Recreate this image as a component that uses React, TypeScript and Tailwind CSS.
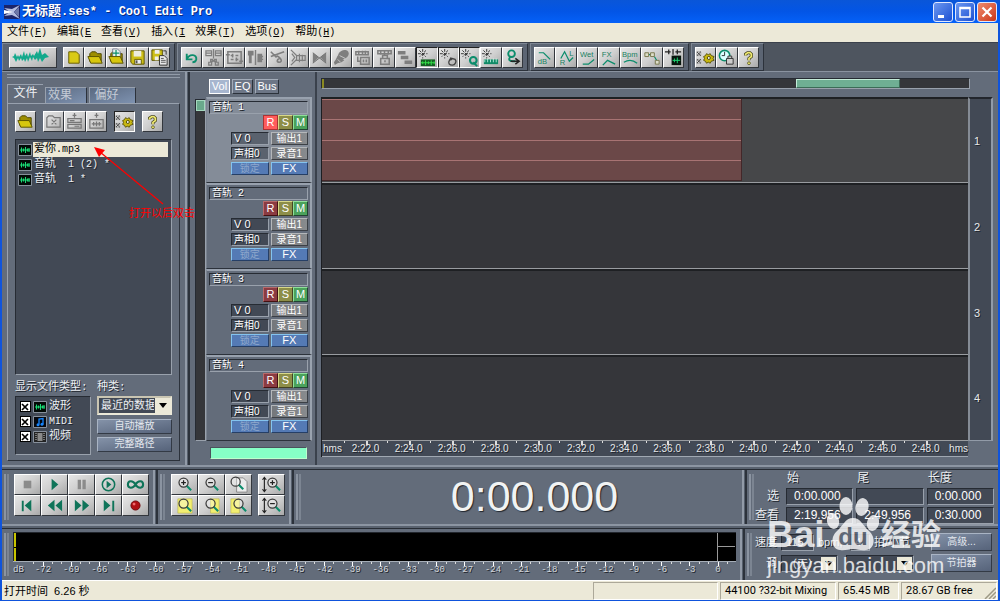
import type { ReactNode } from "react";
import clsx from "clsx";

const mono = "font-['Liberation_Mono','Noto_Sans_CJK_SC',monospace]";
const sans = "font-['Liberation_Sans','Noto_Sans_CJK_SC',sans-serif]";
const shadow = "[text-shadow:1px_1px_0_#20252d]";
const sunken = "border border-t-[#262b33] border-l-[#262b33] border-r-[#99a1ac] border-b-[#99a1ac]";
const raised = "border border-t-[#98a1ae] border-l-[#98a1ae] border-r-[#2c323b] border-b-[#2c323b]";

const G = "#0c8d6c";
const GREY = "#7e7e7e";

function Glyph({ children }: { children: ReactNode }) {
  return (
    <svg viewBox="0 0 20 20" className="size-[19px]" fill="none" aria-hidden="true">
      {children}
    </svg>
  );
}

function Burst() {
  return <path d="M6 1v10M1 6h10M2.5 2.5l7 7M9.500 2.500l-7 7" stroke="#333" strokeWidth="1" strokeDasharray="3 1.400" />;
}

function Gear() {
  return (
    <>
      <path d="M1 4h4v4H1zM1 12h4v4H1z" fill="#f4f4f4" stroke="#777" strokeWidth=".6" />
      <path d="M1 4l4 4M5 4L1 8M1 12l4 4M5 12l-4 4" stroke="#222" strokeWidth=".9" />
      <path d="M8 9l2-1 1-2 2 1 2-1 1 2 3 1-1 2 1 2-3 1-1 2-2-1-2 1-1-2-2-1 1-2z" fill="#c9b810" stroke="#514a00" strokeWidth=".9" />
      <circle cx="13.500" cy="10.500" r="1.600" fill="#eee" stroke="#514a00" />
    </>
  );
}

function Folder({ plus = false }: { plus?: boolean }) {
  return (
    <>
      <path d="M4 14V6l2-2h4l2 2h4v8z" fill="#9d8e00" stroke="#4d4600" />
      {plus && <path d="M6 1h5l3 3v6H6z" fill="#e8f4ef" stroke="#557" strokeWidth=".7" />}
      {plus && <path d="M9.500 2v7M6 5.500h7" stroke={G} strokeWidth="1.300" />}
      <path d="M2 9h12l3 7H5z" fill="#d7c70e" stroke="#5a5200" />
    </>
  );
}

function Question() {
  return (
    <>
      <path d="M7 8V6.500L9 5h2.500L13 6.500V9l-2.500 2v2" stroke="#4c4a20" strokeWidth="3.400" />
      <path d="M7 8V6.500L9 5h2.500L13 6.500V9l-2.500 2v2" stroke="#f0ea70" strokeWidth="1.800" />
      <circle cx="10.500" cy="16" r="1.500" fill="#f0ea70" stroke="#4c4a20" strokeWidth=".8" />
    </>
  );
}

function Lens({ sign = "", x = 9, y = 8 }: { sign?: string; x?: number; y?: number }) {
  return (
    <>
      <path d={`M${x + 3} ${y + 3}l5 5`} stroke={G} strokeWidth="2.200" />
      <circle cx={x} cy={y} r="4.800" stroke="#3b3b3b" strokeWidth="1.300" fill="#ffffff55" />
      {sign !== "" && <path d={`M${x - 2.500} ${y}h5`} stroke="#222" strokeWidth="1.300" />}
      {sign === "+" && <path d={`M${x} ${y - 2.500}v5`} stroke="#222" strokeWidth="1.300" />}
    </>
  );
}

function GlyphText({ x, y, children }: { x: number; y: number; children: string }) {
  return (
    <text x={x} y={y} fontSize="8" fill="#17805f" fontFamily="Liberation Sans, sans-serif">
      {children}
    </text>
  );
}

function WaveChip() {
  return (
    <svg viewBox="0 0 14 12" className="h-3 w-3.5 shrink-0" aria-hidden="true">
      <path d="M.5.5h13v11H.5z" fill="#030a06" stroke="#87909c" />
      <path d="M2 6h10M3.500 3.500v5M5.500 4.500v3M7.500 3v6M9.500 4.500v3M11 4v4" stroke="#19dd75" strokeWidth="1.100" />
    </svg>
  );
}

const fileIcons: [string, ReactNode][] = [
  ["新建", <path d="M5 4h8l3 3v9H5z" fill="#d9ca16" stroke="#665d00" />],
  ["打开", <Folder />],
  ["追加", <Folder plus />],
  ["保存", <><path d="M3 3h14v14H5l-2-2z" fill="#cdbf17" stroke="#5a5200" /><path d="M6 3h8v6H6z" fill="#ececdf" /><path d="M7 12h7v5H7z" fill="#eee" stroke="#6b6200" /><path d="M8 13h2v3H8z" fill="#555" /></>],
  ["另存为", <><path d="M2 2h11v11H2z" fill="#cdbf17" stroke="#5a5200" /><path d="M5 2h5v4H5zM5 9h4v4H5z" fill="#eee" /><path d="M14 3h3v4" stroke="#333" /><path d="M10 8h5l3 3v7h-8z" fill="#e8e8e8" stroke="#333" /><path d="M11.500 11h3M11.500 13h5M11.500 15h5" stroke="#555" /></>],
];

const editIcons: [string, ReactNode, boolean?][] = [
  ["撤消", <path d="M5 6v6h6M5 12c3-7 11-5 10 0-.5 2-2 3-4 3" stroke={G} strokeWidth="2" />],
  ["循环", <path d="M2 3h6v5H2zM12 3h6v5h-6zM2 5.500h6M12 5.500h6M10 1v10M7 12h2v2H7zM11 12h2v2h-2zM5 15h3v3H5zM12 15h3v3h-3zM8 15l4-3M12 15l-4-3" stroke={GREY} strokeWidth="1.300" />],
  ["修剪", <path d="M3 4h14v12H3zM1 7h4M15 14h4M6 8h3M11 8h3M6 12h3M11 12h3M8 6v4M12 10v4" stroke={GREY} strokeWidth="1.600" />],
  ["拆分", <><path d="M2 3h6v5H2zM3 8h3v8H3zM12 6h5v9h-5z" fill={GREY} /><path d="M10 2v16M13 9h5M13 12h5" stroke={GREY} strokeWidth="1.500" /></>],
  ["剪切", <path d="M3 4l6 6M3 9l14-5M9 8c6 3 6 7 3 7s-3-3 0-4" stroke={GREY} strokeWidth="1.700" />],
  ["合并", <path d="M2 2l6 6v4l-6 6M3 6l3 4-3 4M8 8h9v5H8zM11 6v9M14 7v7" stroke={GREY} strokeWidth="1.300" />],
  ["交叉淡化", <><path d="M3 5l6 5-6 6zM17 5l-6 5 6 6z" fill={GREY} /><path d="M3 5l14 11M17 5L3 16" stroke="#6e6e6e" /></>],
  ["混缩", <><ellipse cx="12" cy="7" rx="6" ry="4.500" fill={GREY} transform="rotate(-30 12 7)" /><path d="M6 8l7 5-3 2-4 1-3 2-1-3 2-3z" fill={GREY} /><path d="M8 8l6 3M6 12l3 3" stroke="#c6c6c6" /></>],
  ["分组", <path d="M3 4h13v3H3zM6 3v5M10 3v5M13 3v5M8 10h9v7H8zM5 9v5h3M11 12v3M14 12v3" stroke={GREY} strokeWidth="1.600" />],
  ["锁定时间", <path d="M3 3h14v3H3zM6 2v5M10 2v5M14 2v5M6 11h9v6H6zM8 11V8h5v3M10.500 13v2" stroke={GREY} strokeWidth="1.600" />],
  ["对齐", <path d="M2 5h8M5 10h8M9 15h8" stroke={GREY} strokeWidth="3.500" />],
  ["吸附标尺", <><Burst /><path d="M4 12h15v7H4z" fill="#155f23" /><path d="M4 15.500h15M6 14v3M9 13v5M12 14v3M15 13v5M18 14v3" stroke="#35e04a" /></>, true],
  ["吸附循环", <><Burst /><path d="M13 10l-2 3c-2 3 0 5 3 5s5-4 3-6l-3-1-2 2" stroke="#444" strokeWidth="1.500" /></>, true],
  ["吸附标记", <><Burst /><circle cx="14" cy="13" r="3.500" stroke={G} strokeWidth="2.200" /><path d="M14 15l4 4" stroke={G} strokeWidth="2" /></>, true],
  ["吸附块", <><Burst /><path d="M3 12h15v5H3z" fill="#108a67" /><path d="M4 12v3M7 11v4M10 12v3M13 11v4M16 11v4" stroke="#d7fff2" strokeWidth=".8" /></>],
  ["标记", <><circle cx="9" cy="6" r="3.500" stroke={G} strokeWidth="2" /><path d="M8 9c-3 3-1 5 2 5h3" stroke={G} strokeWidth="2" /><path d="M8 14h8M13 11l4 3-4 3" stroke="#222" strokeWidth="1.600" /></>],
];

const envelopeIcons: [string, ReactNode][] = [
  ["音量包络", <><path d="M4 5h5l7 7" stroke={G} strokeWidth="1.300" /><GlyphText x={3} y={17}>dB</GlyphText></>],
  ["声相包络", <><path d="M4 11l4-7 5 10 4-4" stroke={G} strokeWidth="1.300" /><GlyphText x={13} y={8}>L</GlyphText><GlyphText x={3} y={18}>R</GlyphText></>],
  ["湿声包络", <><GlyphText x={2} y={9}>Wet</GlyphText><path d="M5 17h6l6-5" stroke={G} strokeWidth="1.400" /></>],
  ["效果包络", <><GlyphText x={3} y={9}>FX</GlyphText><path d="M4 18l5-5 8 4" stroke={G} strokeWidth="1.400" /></>],
  ["速度包络", <><GlyphText x={1} y={9}>Bpm</GlyphText><path d="M3 15c5-3 9-3 14 1" stroke={G} strokeWidth="1.400" /></>],
  ["编辑包络", <><path d="M7 7h2M13 9l3 5" stroke={G} strokeWidth="1.300" /><path d="M3 5h4v4H3zM9 5h4v4H9zM14 13h4v4h-4z" fill="#dedecb" stroke="#77764c" /></>],
  ["修剪块", <><path d="M1 4h6M12 4h6M5 1.500v5M9.500 1v6M14 1.500v5" stroke="#222" strokeWidth="1.300" /><path d="M8 8h10v10H8z" fill="#07150d" /><path d="M9 13h8M11 11v4M14 10v6" stroke="#1dd873" /></>],
];

const optionIcons: [string, ReactNode][] = [
  ["设置", <Gear />],
  ["锁定时钟", <><circle cx="8" cy="8" r="5.500" stroke={G} strokeWidth="1.600" fill="#dff" /><path d="M8 4v4H5" stroke="#333" /><path d="M10 11h7v6h-7zM11.500 11V8.500h4V11" fill="#ccc" stroke="#333" /></>],
  ["帮助", <Question />],
];

const transport: [string, ReactNode][] = [
  ["停止", <path d="M6 6h8v8H6z" fill="#8b8b8b" />],
  ["播放", <path d="M7 4l7 6-7 6z" fill="#0f7459" />],
  ["暂停", <path d="M6 5h3.500v10H6zM11 5h3.500v10H11z" fill="#8b8b8b" />],
  ["播放到结尾", <><circle cx="10" cy="10" r="6.500" stroke="#0f7459" strokeWidth="1.600" /><path d="M8 6l5 4-5 4z" fill="#0f7459" /></>],
  ["循环播放", <path d="M10 10c-3-5-8-4-8 0s5 5 8 0 8-4 8 0-5 5-8 0z" stroke="#0f7459" strokeWidth="2.200" />],
  ["到开头", <path d="M4 5h2v11H4zM14 4v12l-7-6z" fill="#0f7459" />],
  ["快退", <path d="M10 4v12l-7-6zM18 4v12l-7-6z" fill="#0f7459" />],
  ["快进", <path d="M3 4v12l7-6zM11 4v12l7-6z" fill="#0f7459" />],
  ["到结尾", <path d="M14 5h2v11h-2zM5 4v12l7-6z" fill="#0f7459" />],
  ["录音", <><circle cx="10" cy="10" r="4.800" fill="#b01014" stroke="#6e0508" /><circle cx="8.500" cy="8.500" r="1.500" fill="#ef6b6e" /></>],
];

const zooms: [string, ReactNode][] = [
  ["放大", <Lens sign="+" />],
  ["缩小", <Lens sign="-" />],
  ["全部", <><path d="M8 3h7l4 4v11H8z" fill="#ececec" stroke="#888" /><Lens x={7} y={7} /></>],
  ["缩放到选区", <><path d="M3 3h15v15H3z" fill="#f2ee70" stroke="#b9b545" strokeWidth=".6" /><Lens /></>],
  ["选区左侧", <><path d="M9 3h9v15H9z" fill="#f2ee70" stroke="#b9b545" strokeWidth=".6" /><Lens /></>],
  ["选区右侧", <><path d="M2 3h9v15H2z" fill="#f2ee70" stroke="#b9b545" strokeWidth=".6" /><Lens x={10} /></>],
];

const verticalZooms: [string, ReactNode][] = [
  ["垂直放大", <><path d="M2.500 3v14M.5 5l2-2.500 2 2.500M.5 15l2 2.500 2-2.500" stroke="#222" strokeWidth="1.200" /><Lens sign="+" x={11} /></>],
  ["垂直缩小", <><path d="M2.500 3v14M.5 5l2-2.500 2 2.500M.5 15l2 2.500 2-2.500" stroke="#222" strokeWidth="1.200" /><Lens sign="-" x={11} /></>],
];

function MetalButton({ label, pressed, className, children }: { label: string; pressed?: boolean; className?: string; children: ReactNode }) {
  return (
    <button
      type="button"
      aria-label={label}
      className={clsx(
        "flex h-[21px] min-w-0 items-center justify-center overflow-hidden border bg-linear-to-br from-[#e6e6e6] via-[#cfcfcf] to-[#a9a9a9]",
        pressed ? "border-t-[#222] border-l-[#222] border-r-white border-b-white" : "border-t-white border-l-white border-r-[#33373d] border-b-[#33373d]",
        className,
      )}
    >
      {children}
    </button>
  );
}

function IconStrip({ items, className }: { items: [string, ReactNode, boolean?][]; className: string }) {
  return (
    <div className={clsx("flex", className)}>
      {items.map(([label, icon, pressed]) => (
        <MetalButton key={label} label={label} pressed={pressed} className="flex-1">
          <Glyph>{icon}</Glyph>
        </MetalButton>
      ))}
    </div>
  );
}

function MixedText({ text }: { text: string }) {
  return text.split(/([\x20-\x7e]+)/).map((part, i) => (
    <span key={i} className={i % 2 === 1 ? "text-[10px]" : "text-[11px]"}>{part}</span>
  ));
}

const toolGroup = "flex items-center border border-t-[#7d8693] border-l-[#7d8693] border-r-[#2c323b] border-b-[#2c323b] bg-[#5c6573]";

function Grip() {
  return <div className="my-1 w-[5px] shrink-0 self-stretch border-x-2 border-[#8b94a1] border-r-[#7c8592]" />;
}

function Divider() {
  return <div className="w-[5px] shrink-0 self-stretch border-l-2 border-r-2 border-l-[#929ba8] border-r-[#2c323b] bg-[#565f6c]" />;
}

function HDivider() {
  return <div className="h-[5px] shrink-0 border-t-2 border-b border-t-[#8c95a2] border-b-[#272c34] bg-[#59626f]" />;
}

const menus: [string, string, boolean][] = [
  ["文件", "F", true],
  ["编辑", "E", false],
  ["查看", "V", true],
  ["插入", "I", false],
  ["效果", "T", true],
  ["选项", "O", true],
  ["帮助", "H", true],
];

function TitleBar() {
  return (
    <header className="-mx-0.5 flex h-[23px] items-center bg-linear-to-b from-[#0a56d8] via-[#0355e6] to-[#0561f8] pr-[3px] pl-1 text-white">
      <svg viewBox="0 0 16 16" className="mr-0.5 size-4" aria-hidden="true">
        <path d="M0 1h16v14H0z" fill="#1b2469" />
        <path d="M0 4l8 1 8-4-6 7 6 7-8-4-8 1 6-4z" fill="#b4bde0" />
        <path d="M0 6l9 2-9 2z" fill="#fff" />
        <path d="M10 8l5-5v10z" fill="#6d77a8" />
      </svg>
      <h1 className={clsx("flex items-center font-bold whitespace-pre [text-shadow:1px_1px_0_#0a2a80]", mono)}>
        <span className="text-[13px]">无标题</span>
        <span className="text-[12px]">.ses* - Cool Edit Pro</span>
      </h1>
      <div className="ml-auto flex gap-0.5">
        {["最小化", "最大化", "关闭"].map((name, i) => (
          <button
            key={name}
            type="button"
            aria-label={name}
            className={clsx("size-5 rounded-[3px] border border-[#dfe8ff]", i === 2 ? "bg-linear-to-br from-[#ee8a6c] to-[#cc3210]" : "bg-linear-to-br from-[#6c97f0] to-[#1c4fd2]")}
          >
            <svg viewBox="0 0 18 18" fill="none" stroke="#fff" aria-hidden="true">
              {i === 0 && <path d="M4 13.500h6" strokeWidth="3" />}
              {i === 1 && <path d="M4 4.500h10v9.500H4zM4 5.500h10" strokeWidth="1.500" />}
              {i === 2 && <path d="M4.500 4.500l9 9M13.500 4.500l-9 9" strokeWidth="2.200" />}
            </svg>
          </button>
        ))}
      </div>
    </header>
  );
}

function Toolbar() {
  return (
    <div className="flex h-[30px] gap-0.5 border-t border-b border-t-[#3b414b] border-b-[#8a93a0] bg-[#4e555f]">
      <div className={clsx(toolGroup, "gap-1.5 pr-1 pl-1.5")}>
        <MetalButton label="波形视图" className="w-12">
          <svg viewBox="0 0 46 19" className="h-[19px] w-[46px]" aria-hidden="true">
            <path d="M2 9l2-1 1-3 2 4 1-2 1 2 2-3 1 3 2-6 1 5 2-3 1 4 2-5 1 4 2-2 1 2 3-5 1 3 2-6 2 7 3-2 4 4-4 1-3 4-2-4-2 4-1-4-2 2-2-3-1 4-2-4-2 5-1-4-2 4-1-3-2 2-1-3-2 3-1-3-2 4-2-4z" fill="#12a98c" />
          </svg>
        </MetalButton>
        <IconStrip items={fileIcons} className="w-[107px]" />
      </div>
      <div className={clsx(toolGroup, "pr-1 pl-[3px]")}>
        <IconStrip items={editIcons} className="w-[342px]" />
      </div>
      <div className={clsx(toolGroup, "pr-1 pl-[3px]")}>
        <IconStrip items={envelopeIcons} className="w-[150px]" />
      </div>
      <div className={clsx(toolGroup, "pr-1 pl-[3px]")}>
        <IconStrip items={optionIcons} className="w-16" />
      </div>
    </div>
  );
}

const steel = "border border-t-[#a9b4c4] border-l-[#a9b4c4] border-r-[#333a45] border-b-[#333a45] bg-linear-to-br from-[#8492a8] to-[#56637a] text-[#e4e8ee]";

function FilePanel() {
  return (
    <aside className={clsx("relative flex flex-col px-[5px] pt-0.5 pb-1 text-[11px] text-[#eceff3]", mono, shadow)}>
      <div className="h-1 border-y border-[#929ba8]" />
      <nav className="mt-[6px] flex items-end gap-0.5 text-[12px]">
        <button type="button" className="h-[19px] w-9 border-t border-l border-[#98a1ae] bg-[#636c7a] leading-[19px]">文件</button>
        {["效果", "偏好"].map((t, i) => (
          <button key={t} type="button" className={clsx("h-4 border-t border-l border-r border-t-[#98a1ae] border-l-[#98a1ae] border-r-[#2c323b] bg-linear-to-br from-[#5b6a81] to-[#7e92b0] pr-3 leading-[16px] text-[#c5ccd6]", i === 0 ? "w-[42px]" : "w-[47px]")}>
            {t}
          </button>
        ))}
      </nav>
      <div className={clsx("flex flex-1 flex-col px-[7px] pt-[7px] pb-[5px]", raised)}>
        <div className="flex gap-[7px]">
          <MetalButton label="打开文件" className="w-[21px]"><Glyph><Folder /></Glyph></MetalButton>
          <IconStrip
            className="w-16"
            items={[
              ["关闭文件", <path d="M3 6l2-2h4l2 2h6v10H3zM8 8l5 5M13 8l-5 5" stroke="#777" strokeWidth="1.300" />],
              ["插入到多轨", <path d="M10 1v5M8 3.500h4M3 7h14v4H3zM3 13h14v4H3zM5 9h5M10 15h5" stroke="#777" strokeWidth="1.300" />],
              ["编辑文件", <path d="M10 1v5M8 3.500h4M3 8h14v9H3zM5 12.500h10M7 10.500v4M10 10v5M13 10.500v4" stroke="#777" strokeWidth="1.300" />],
            ]}
          />
          <MetalButton label="选项" pressed className="w-[21px]"><Glyph><Gear /></Glyph></MetalButton>
          <MetalButton label="帮助" className="w-[21px]"><Glyph><Question /></Glyph></MetalButton>
        </div>
        <ul className={clsx("mt-[7px] min-h-[236px] flex-1 bg-[#424955] py-[2px] pr-[3px] pl-0.5", sunken)}>
          {["爱你.mp3", "音轨  1 (2) *", "音轨  1 *"].map((name, i) => (
            <li key={name} className="flex h-[15px] items-center gap-px whitespace-pre">
              <WaveChip />
              <span className={clsx("h-[15px] flex-1 pl-px leading-[15px]", i === 0 && "bg-[#ece9d8] text-black [text-shadow:none]")}>
                <MixedText text={name} />
              </span>
            </li>
          ))}
        </ul>
        <div className="mt-1 flex gap-1.5">
          <div className="w-[76px]">
            <div className="h-[17px] leading-[17px]">显示文件类型:</div>
            <div className={clsx("flex h-[59px] flex-col bg-[#424955] pt-0.5 pl-[3px]", sunken)}>
              {["波形", "MIDI", "视频"].map((t, i) => (
                <label key={t} className="flex h-[15px] items-center gap-0.5">
                  <span className="grid size-3 place-items-center">
                    <input type="checkbox" defaultChecked className="peer col-start-1 row-start-1 size-[11px] appearance-none border border-black bg-white" />
                    <svg viewBox="0 0 10 10" className="pointer-events-none col-start-1 row-start-1 hidden size-2.5 peer-checked:block" aria-hidden="true">
                      <path d="M2 2l6 6M8 2L2 8" stroke="#000" strokeWidth="1.700" />
                    </svg>
                  </span>
                  {i === 0 && <WaveChip />}
                  {i === 1 && (
                    <svg viewBox="0 0 14 12" className="h-3 w-3.5" aria-hidden="true">
                      <path d="M.5.5h13v11H.5z" fill="#05080e" stroke="#87909c" />
                      <path d="M6 8.500V3l4-.5V8" fill="none" stroke="#1686ff" strokeWidth="1.300" />
                      <circle cx="5" cy="8.700" r="1.500" fill="#1686ff" />
                      <circle cx="9" cy="8.200" r="1.500" fill="#1686ff" />
                    </svg>
                  )}
                  {i === 2 && (
                    <svg viewBox="0 0 14 12" className="h-3 w-3.5" aria-hidden="true">
                      <path d="M.5.5h13v11H.5z" fill="#222" stroke="#87909c" />
                      <path d="M4.500 2h5v8h-5z" fill="#8a8a8a" />
                      <path d="M3 2v8M11 2v8" stroke="#ccc" strokeDasharray="1 1" />
                    </svg>
                  )}
                  <span><MixedText text={t} /></span>
                </label>
              ))}
            </div>
          </div>
          <div className="flex flex-1 flex-col">
            <label htmlFor="kind" className="h-[17px] leading-[17px]">种类:</label>
            <div className="relative">
              <select id="kind" className="block h-[19px] w-full appearance-none border-2 border-[#ece9d8] border-t-[#c9c5b2] border-l-[#c9c5b2] bg-[#424955] pr-4 pl-0.5 text-[11px] leading-[14px]">
                <option>最近的数据</option>
              </select>
              <DropArrow />
            </div>
            <button type="button" className={clsx("mt-1 h-[15px] text-[10px] leading-[13px]", steel)}>自动播放</button>
            <button type="button" className={clsx("mt-[3px] h-[15px] text-[10px] leading-[13px]", steel)}>完整路径</button>
          </div>
        </div>
      </div>
      <div className="pointer-events-none absolute top-[74px] left-[90px] text-[#f00] [text-shadow:none]">
        <svg viewBox="0 0 74 60" className="h-[60px] w-[74px]" aria-hidden="true">
          <path d="M71 58L8 6" stroke="#f00" strokeWidth="1.200" />
          <path d="M2 1l11 3-6 7z" fill="#f00" />
        </svg>
        <p className="pl-[37px] text-[11px] leading-[16px] whitespace-nowrap">打开以后双击</p>
      </div>
    </aside>
  );
}

function DropArrow() {
  return (
    <span className="pointer-events-none absolute top-0.5 right-0.5 bottom-0.5 grid w-[15px] place-items-center bg-[#ece9d8]">
      <svg viewBox="0 0 8 5" className="h-[5px] w-2" aria-hidden="true"><path d="M0 0h8L4 5z" fill="#000" /></svg>
    </span>
  );
}

const rsm = "size-[15px] border text-[11px] leading-[13px]";
const grayBtn = "h-[13px] border border-t-[#b4b7ba] border-l-[#b4b7ba] border-r-[#3c4046] border-b-[#3c4046] bg-linear-to-r from-[#74777b] to-[#888b8e] leading-[11px]";
const blueBtn = "h-[13px] border border-t-[#84c3ee] border-l-[#84c3ee] border-r-[#263f66] border-b-[#263f66] bg-[#547ab5] leading-[11px]";

function Track({ n }: { n: number }) {
  const on = n === 1;
  return (
    <section className={clsx("h-[86px] border-t-2 border-r-2 border-b border-l border-t-[#98a1ae] border-r-[#9aa3af] border-b-[#2c323b] border-l-[#7a8390] px-0.5 pt-0.5", on ? "bg-[#848c98]" : "bg-[#636c7a]")}>
      <h2 className={clsx("h-[13px] pl-0.5 text-[10px] leading-[11px] font-normal whitespace-pre", mono, sunken)}>音轨 {n}</h2>
      <div className="mt-px flex justify-end">
        <button type="button" className={clsx(rsm, on ? "border-[#a33] bg-[#ff5c5c]" : "border-t-[#b86a6a] border-l-[#b86a6a] border-r-[#411] border-b-[#411] bg-[#8b3b42]")}>R</button>
        <button type="button" className={clsx(rsm, "border-t-[#d8d888] border-l-[#d8d888] border-r-[#442] border-b-[#442] bg-[#8d8e48]")}>S</button>
        <button type="button" className={clsx(rsm, "border-t-[#8fe09a] border-l-[#8fe09a] border-r-[#243] border-b-[#243] bg-[#4ba25b]")}>M</button>
      </div>
      <div className="mt-0.5 ml-[22px] grid grid-cols-2 gap-x-0.5 gap-y-0.5 text-[10px]">
        <div className={clsx("h-[13px] pl-0.5 text-[11px] leading-[11px]", sunken, on ? "bg-[#5a626e]" : "bg-[#424955]")}>V 0</div>
        <button type="button" className={grayBtn}>输出1</button>
        <div className={clsx("h-[13px] pl-0.5 leading-[11px]", sunken, on ? "bg-[#5a626e]" : "bg-[#424955]")}>声相0</div>
        <button type="button" className={grayBtn}>录音1</button>
        <button type="button" className={clsx(blueBtn, "text-[#8fa8cc]")}>锁定</button>
        <button type="button" className={clsx(blueBtn, "text-[11px]")}>FX</button>
      </div>
    </section>
  );
}

function TrackPanel() {
  return (
    <section className={clsx("flex flex-col pt-[7px] pr-px pl-[5px] text-white", sans, shadow)}>
      <div className="ml-[14px] flex h-[16px] items-start gap-[2px] text-[11px] leading-[13px]">
        <button type="button" className="h-[15px] w-[21px] border border-white bg-[#a7b6cf]">Vol</button>
        <button type="button" className="h-[15px] w-[21px] border border-[#a2abb8] border-r-[#2c323b] border-b-[#2c323b] bg-[#6d7686]">EQ</button>
        <button type="button" className="h-[15px] w-[24px] border border-[#a2abb8] border-r-[#2c323b] border-b-[#2c323b] bg-[#6d7686]">Bus</button>
      </div>
      <div className="mt-[2px] flex">
        <div className={clsx("mt-0.5 w-[11px] bg-[#35363a]", sunken)}>
          <div className="h-[11px] border border-[#a5d8bf] bg-[#6aa98c]" />
        </div>
        <div className="flex-1">{[1, 2, 3, 4].map((n) => <Track key={n} n={n} />)}</div>
      </div>
      <div className="mt-1.5 mr-[5px] ml-[15px] h-[12px] border border-t-[#4b525c] border-l-[#4b525c] border-r-[#bfc] border-b-[#bfc] bg-[#86ffc6]" />
    </section>
  );
}

const seconds = Array.from({ length: 14 }, (_, i) => 22 + i * 2);

function Timeline() {
  return (
    <section className={clsx("flex min-w-0 flex-col pt-[6px] pr-[5px] pl-1 text-[#e6e8ea]", sans, shadow)}>
      <div className={clsx("mr-[23px] flex h-[11px] bg-[#35363a]", sunken)}>
        <div className="w-0.5 border-l-2 border-[#8b8a22]" />
        <div className="ml-[73%] w-[16%] border border-t-[#c4ecd9] border-l-[#c4ecd9] border-r-[#3c6b57] border-b-[#3c6b57] bg-[#6fae93]" />
      </div>
      <div className="mt-[8px] flex">
        <div className="min-w-0 flex-1 border-l border-l-[#1c1e22]">
          {[1, 2, 3, 4].map((n) => (
            <div key={n} className={clsx("h-[86px] border-t-2 border-b border-t-[#1e2023] border-b-[#999ca0]", n === 1 ? "bg-[#464749]" : "bg-[#35363a]")}>
              {n === 1 && (
                <div className="grid h-[82px] w-[65%] grid-rows-4 border-r border-b border-[#442729] bg-[#6b4848]">
                  {[0, 1, 2, 3].map((k) => <div key={k} className="border-t border-[#a87373]" />)}
                </div>
              )}
            </div>
          ))}
          <div className="flex h-[16px] border-b border-[#a0a8b2] bg-[#424955] text-[10px] leading-[12px]">
            <span className="w-[22px] pt-0.5 pl-px">hms</span>
            {seconds.map((s) => (
              <div key={s} className="flex min-w-0 flex-1 flex-col items-stretch">
                <div className="grid h-1 grid-cols-2 items-start">
                  <div className="h-0.5 border-l border-[#ddd]" />
                  <div className="h-1 border-l-2 border-[#ddd]" />
                </div>
                <span className="-mt-0.5 text-center">2:{s}.0</span>
              </div>
            ))}
            <span className="w-[21px] pt-0.5 pl-0.5">hms</span>
          </div>
        </div>
        <div className="w-[25px]">
          <div className="border-t-2 border-r-2 border-b border-l-2 border-t-[#22262d] border-r-[#929ba8] border-b-[#929ba8] border-l-[#858c95] bg-[#424955]">
            {[1, 2, 3, 4].map((n) => <div key={n} className="flex h-[86px] items-center pl-[4px] text-[11px] first:h-[85px] last:h-[84px]">{n}</div>)}
          </div>
        </div>
      </div>
    </section>
  );
}

function PadGrid({ items, cols }: { items: [string, ReactNode][]; cols: string }) {
  return (
    <div className={clsx("grid", cols)}>
      {items.map(([label, icon]) => (
        <MetalButton key={label} label={label} className="w-[27px]"><Glyph>{icon}</Glyph></MetalButton>
      ))}
    </div>
  );
}

const field = "h-[17px] w-full min-w-0 bg-[#424955] px-[7px] text-[12px] leading-[15px] text-white outline-none";

function TimeFields() {
  return (
    <div className={clsx("grid w-[238px] shrink-0 grid-cols-[27px_repeat(3,1fr)] items-center gap-x-[3px] gap-y-px text-[12px] text-[#e8ebef]", sans, shadow)}>
      <span />
      <span className="pl-px leading-[15px]">始</span>
      <span className="pl-px leading-[15px]">尾</span>
      <span className="pl-px leading-[15px]">长度</span>
      {[["选", "0:00.000", "", "0:00.000"], ["查看", "2:19.956", "2:49.956", "0:30.000"]].map(([name, ...values]) => (
        <TimeRow key={name} name={name} values={values} />
      ))}
    </div>
  );
}

function TimeRow({ name, values }: { name: string; values: string[] }) {
  return (
    <>
      <span className="flex justify-end pr-1 leading-[17px] whitespace-nowrap">{name}</span>
      {values.map((v, i) => <input key={i} aria-label={`${name} ${["始", "尾", "长度"][i]}`} defaultValue={v} className={clsx(field, sunken)} />)}
    </>
  );
}

const levels = Array.from({ length: 25 }, (_, i) => -72 + i * 3);

function Meter() {
  return (
    <div className={clsx("min-w-0 flex-1 pt-[3px] pr-0.5 pl-[2px] text-[9px] text-[#d3d7dc]", mono, shadow)}>
      <div className="flex h-[29px] border-t border-l border-[#22262d] bg-black pr-px">
        <div className="grid w-0.5 grid-rows-2 gap-px"><i className="bg-[#c8c400]" /><i className="bg-[#c8c400]" /></div>
        <div className="flex-1" />
        <div className="grid w-[18px] grid-rows-2 border-l border-[#999]"><i className="border-b border-[#999]" /><i /></div>
      </div>
      <div className="flex border-t border-[#a5adb7]">
        <span className="w-4 pt-0.5 leading-[12px]">dB</span>
        {levels.map((l) => (
          <div key={l} className="min-w-0 flex-1">
            <div className="grid h-1 grid-cols-3 justify-items-center">
              <i className="h-0.5 w-px bg-[#ddd]" />
              <i className="h-1 w-px bg-white" />
              <i className="h-0.5 w-px bg-[#ddd]" />
            </div>
            <span className="-mt-0.5 block text-center leading-[12px]">{l}</span>
          </div>
        ))}
        <span className="w-1" />
      </div>
    </div>
  );
}

function TempoPanel() {
  return (
    <div className={clsx("flex w-[238px] shrink-0 flex-col gap-[3px] pt-1 text-[11px] text-[#e8ebef]", sans, shadow)}>
      <div className="flex h-[18px] items-center gap-1">
        <label htmlFor="bpm" className="flex w-[23px] justify-end whitespace-nowrap">速度</label>
        <input id="bpm" defaultValue="115" className={clsx("h-[17px] w-[33px] bg-[#424955] px-1", sunken)} />
        <span className="w-7">bpm,</span>
        <input aria-label="拍数" defaultValue="4" className={clsx("h-[17px] w-5 bg-[#424955] px-1", sunken)} />
        <span className="whitespace-nowrap">拍/小节</span>
        <button type="button" className={clsx("ml-auto h-[18px] w-[61px] text-[10px] leading-[16px]", steel)}>高级...</button>
      </div>
      <div className="flex h-[18px] items-center gap-1">
        <label htmlFor="key" className="w-[23px] text-right">调</label>
        <div className="relative w-[57px]">
          <select id="key" className={clsx("block h-[17px] w-full appearance-none bg-[#424955] pl-1", sunken)}><option>（无）</option></select>
          <DropArrow />
        </div>
        <div className="relative ml-1 w-[68px]">
          <select aria-label="节奏" className={clsx("block h-[17px] w-full appearance-none bg-[#424955]", sunken)}><option></option></select>
          <DropArrow />
        </div>
        <button type="button" className={clsx("ml-auto h-[18px] w-[61px] text-[10px] leading-[16px]", steel)}>节拍器</button>
      </div>
    </div>
  );
}

function Watermark() {
  return (
    <div className={clsx("pointer-events-none absolute right-[54px] bottom-[22px] w-[179px] text-white opacity-80", sans)}>
      <div className="flex h-[58px] items-end">
        <b className="w-[60px] text-[37px] leading-[34px]">Bai</b>
        <svg viewBox="0 0 52 56" className="h-14 w-[52px]" aria-hidden="true">
          <g fill="#fff">
            <ellipse cx="19" cy="10" rx="6.500" ry="9" />
            <ellipse cx="35" cy="11" rx="6.500" ry="9" transform="rotate(12 35 11)" />
            <ellipse cx="6" cy="25" rx="6" ry="8" transform="rotate(-14 6 25)" />
            <ellipse cx="46" cy="27" rx="6" ry="8" transform="rotate(14 46 27)" />
            <path d="M26 22c8 0 10 8 16 13 7 6 6 18-3 19-5 1-8-1-13-1s-8 2-13 1C4 53 3 41 10 35c6-5 8-13 16-13z" />
          </g>
          <text x="26" y="49" textAnchor="middle" fontSize="24" fontWeight="bold" fill="#5f6876" fontFamily="Liberation Sans, sans-serif">du</text>
        </svg>
        <b className="pl-0.5 text-[30px] leading-[34px] whitespace-nowrap">经验</b>
      </div>
      <p className="text-[22px] leading-[28px]">jingyan.baidu.com</p>
    </div>
  );
}

function StatusBar() {
  const cell = "border border-t-[#aca899] border-l-[#aca899] border-r-white border-b-white px-1 leading-[16px] whitespace-nowrap font-['Roboto','Noto_Sans_CJK_SC',sans-serif]";
  return (
    <footer className={clsx("flex h-5 gap-0.5 border-t border-white bg-[#ece9d8] pt-px pr-px text-[11px] text-black", sans)}>
      <span className="flex-1 pl-0.5 leading-[18px] whitespace-pre">打开时间  6.26 秒</span>
      <span className={clsx(cell, "w-[125px]")} />
      <span className={clsx(cell, "w-[116px]")}>44100 ?32-bit Mixing</span>
      <span className={clsx(cell, "w-[61px]")}>65.45 MB</span>
      <span className={clsx(cell, "flex w-[96px] justify-between pr-0")}>
        28.67 GB free
        <svg viewBox="0 0 12 12" className="size-3 self-end" aria-hidden="true"><path d="M1 12L12 1M5 12l7-7M9 12l3-3" stroke="#9d9985" strokeWidth="1.500" /></svg>
      </span>
    </footer>
  );
}

export default function App() {
  return (
    <div className="relative flex min-h-screen w-full flex-col bg-[#0f54dc] px-0.5 pb-0.5">
      <TitleBar />
      <nav className={clsx("flex h-[19px] items-center gap-2.5 bg-[#ece9d8] pl-[5px] text-black", mono)}>
        {menus.map(([name, key, closed]) => (
          <button key={name} type="button" className="flex items-center whitespace-nowrap">
            <span className="text-[11px]">{name}</span>
            <span className="text-[10px]">(<u>{key}</u>{closed && ")"}</span>
          </button>
        ))}
      </nav>
      <Toolbar />
      <main className="flex flex-1 flex-col bg-[#636c7a]">
        <div className="grid flex-1 grid-cols-[183px_5px_123px_1fr]">
          <FilePanel />
          <Divider />
          <TrackPanel />
          <div className="flex">
            <div className="w-1 border-r-2 border-[#3a414c]" />
            <div className="min-w-0 flex-1"><Timeline /></div>
          </div>
        </div>
        <HDivider />
        <div className="flex h-[54px] gap-0.5 pl-[2px]">
          <Grip />
          <div className="pt-1 pr-0.5 pl-[3px]"><PadGrid items={transport} cols="grid-cols-5" /></div>
          <Divider />
          <Grip />
          <div className="flex items-start gap-1.5 pt-1 pr-0.5 pl-1">
            <PadGrid items={zooms} cols="grid-cols-3" />
            <PadGrid items={verticalZooms} cols="grid-cols-1" />
          </div>
          <Divider />
          <Grip />
          <div className={clsx("flex-1 pr-[20px] pl-[46px] text-center text-[43px] leading-[52px] text-[#f1f3f3] [text-shadow:1px_1px_1px_#20252d]", sans)}>0:00.000</div>
          <Divider />
          <Grip />
          <TimeFields />
          <span className="w-0.5" />
        </div>
        <HDivider />
        <div className="flex h-[51px] gap-0.5 pl-[2px]">
          <Grip />
          <Meter />
          <Divider />
          <Grip />
          <TempoPanel />
          <span className="w-1" />
        </div>
      </main>
      <StatusBar />
      <Watermark />
    </div>
  );
}
